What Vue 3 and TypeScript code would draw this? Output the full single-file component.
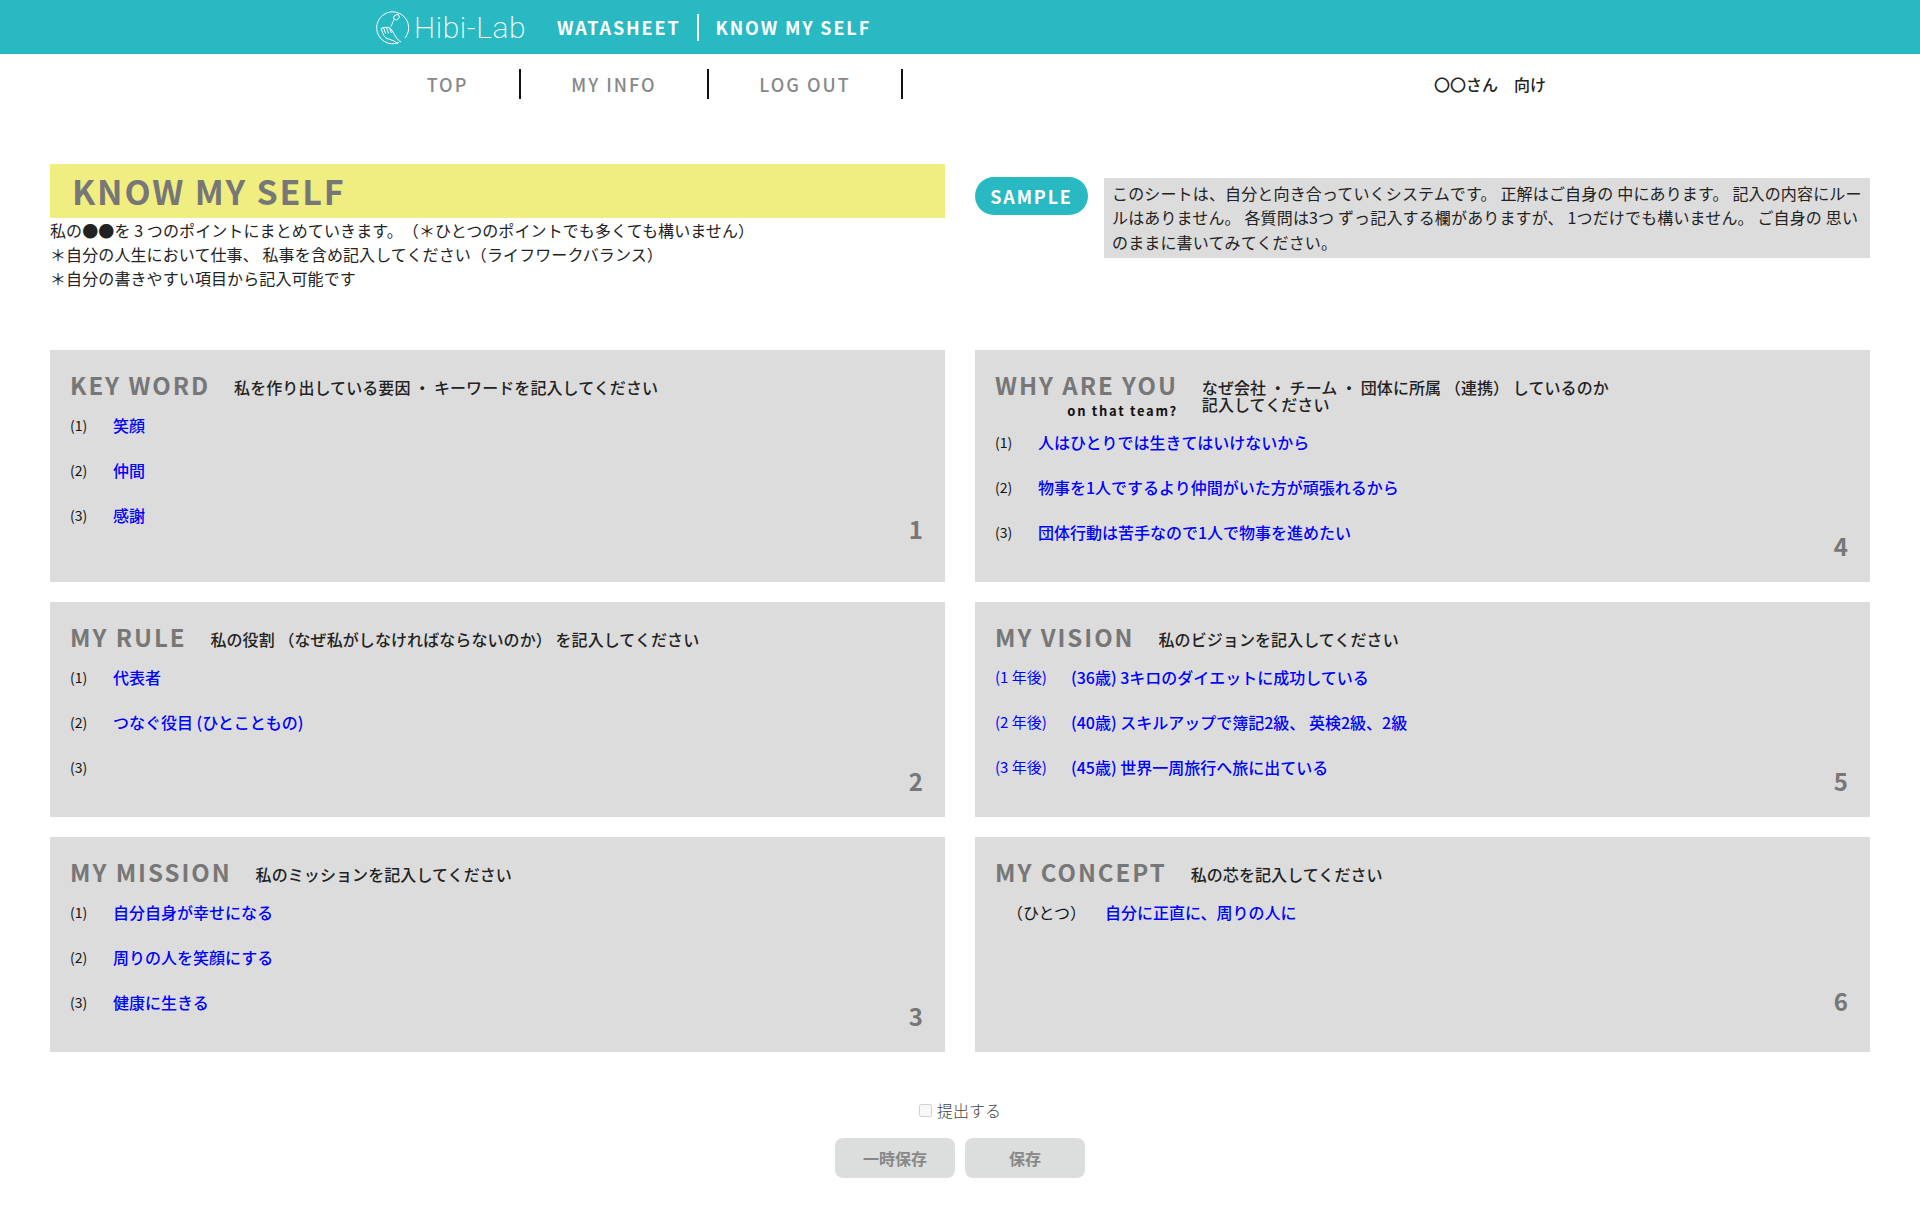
<script setup lang="ts">
interface Row {
  label: string
  value: string
}

interface Card {
  no: number
  title: string
  sub?: string
  lead: string
  rows: Row[]
  first?: boolean
  single?: boolean
}

const leftCards: Card[] = [
  {
    no: 1,
    title: 'KEY WORD',
    lead: '私を作り出している要因 ・ キーワードを記入してください',
    rows: [
      { label: '(1)', value: '笑顔' },
      { label: '(2)', value: '仲間' },
      { label: '(3)', value: '感謝' }
    ],
    first: true
  },
  {
    no: 2,
    title: 'MY RULE',
    lead: '私の役割 （なぜ私がしなければならないのか） を記入してください',
    rows: [
      { label: '(1)', value: '代表者' },
      { label: '(2)', value: 'つなぐ役目 (ひとこともの)' },
      { label: '(3)', value: '' }
    ]
  },
  {
    no: 3,
    title: 'MY MISSION',
    lead: '私のミッションを記入してください',
    rows: [
      { label: '(1)', value: '自分自身が幸せになる' },
      { label: '(2)', value: '周りの人を笑顔にする' },
      { label: '(3)', value: '健康に生きる' }
    ]
  }
]

const rightCards: Card[] = [
  {
    no: 4,
    title: 'WHY ARE YOU',
    sub: 'on that team?',
    lead: 'なぜ会社 ・ チーム ・ 団体に所属 （連携） しているのか 記入してください',
    rows: [
      { label: '(1)', value: '人はひとりでは生きてはいけないから' },
      { label: '(2)', value: '物事を1人でするより仲間がいた方が頑張れるから' },
      { label: '(3)', value: '団体行動は苦手なので1人で物事を進めたい' }
    ]
  },
  {
    no: 5,
    title: 'MY VISION',
    lead: '私のビジョンを記入してください',
    rows: [
      { label: '(1 年後)', value: '(36歳) 3キロのダイエットに成功している' },
      { label: '(2 年後)', value: '(40歳) スキルアップで簿記2級、 英検2級、2級' },
      { label: '(3 年後)', value: '(45歳) 世界一周旅行へ旅に出ている' }
    ]
  },
  {
    no: 6,
    title: 'MY CONCEPT',
    lead: '私の芯を記入してください',
    rows: [{ label: '（ひとつ）', value: '自分に正直に、周りの人に' }],
    single: true
  }
]

const cards = [0, 1, 2].flatMap((i) => [leftCards[i], rightCards[i]])
</script>

<template>
  <div class="page">
    <header class="topbar">
      <div class="logo">
        <svg class="logo__mark" viewBox="0 0 36 36" width="36" height="36" fill="none" stroke="#fff" stroke-width="1">
          <path d="M25 33.500A16 16 0 1 1 31 29" />
          <path d="M20 7l4-2 1.500 3.500-3 2.500-3-1z" />
          <path d="M20 10.500l-3 7" />
          <path d="M7 19.500c3-1.500 6-1.500 9-.5l3 4c1 2 2 4 3 5 1 2 3 4 5 5" />
          <path d="M7 19.500l2 5c1 3 2 4 4 5 3 1 7 2 11 5" />
          <path d="M9.500 18.500l2 6M12.500 18.500l2 6M15.500 19l2 5" />
        </svg>
        <span class="logo__text">Hibi-Lab</span>
      </div>
      <span class="topbar__link">WATASHEET</span>
      <span class="topbar__sep"></span>
      <span class="topbar__link">KNOW MY SELF</span>
    </header>

    <nav class="subnav">
      <a class="subnav__item subnav__item--top">TOP</a>
      <a class="subnav__item subnav__item--info">MY INFO</a>
      <a class="subnav__item subnav__item--out">LOG OUT</a>
      <span class="subnav__user">〇〇さん　向け</span>
    </nav>

    <section class="intro">
      <div>
        <h1 class="intro__title">KNOW MY SELF</h1>
        <p class="intro__text">私の●●を 3 つのポイントにまとめていきます。（＊ひとつのポイントでも多くても構いません）</p>
        <p class="intro__text">＊自分の人生において仕事、 私事を含め記入してください（ライフワークバランス）</p>
        <p class="intro__text">＊自分の書きやすい項目から記入可能です</p>
      </div>
      <div class="sample">
        <span class="sample__badge">SAMPLE</span>
        <p class="sample__text">このシートは、自分と向き合っていくシステムです。 正解はご自身の 中にあります。 記入の内容にルールはありません。 各質問は3つ ずっ記入する欄がありますが、 1つだけでも構いません。 ご自身の 思いのままに書いてみてください。</p>
      </div>
    </section>

    <section class="grid">
      <article v-for="card in cards" :key="card.no" :class="['card', { 'card--first': card.first, 'card--single': card.single }]">
        <div class="card__head">
          <div class="card__heading">
            <h2 class="card__title">{{ card.title }}</h2>
            <span v-if="card.sub" class="card__sub">{{ card.sub }}</span>
          </div>
          <p :class="['card__lead', { 'card__lead--narrow': card.sub }]">{{ card.lead }}</p>
        </div>
        <ul :class="['card__rows', { 'card__rows--sub': card.sub }]">
          <li v-for="row in card.rows" :key="row.label" class="card__row">
            <span :class="['card__label', { 'card__label--blue': card.no === 5, 'card__label--wide': card.no === 6 }]">{{ row.label }}</span>
            <span class="card__value">{{ row.value }}</span>
          </li>
        </ul>
        <span class="card__no">{{ card.no }}</span>
      </article>
    </section>

    <footer class="actions">
      <label class="actions__check">
        <input type="checkbox" disabled />
        <span>提出する</span>
      </label>
      <div class="actions__buttons">
        <button class="btn" type="button" disabled>一時保存</button>
        <button class="btn" type="button" disabled>保存</button>
      </div>
    </footer>
  </div>
</template>

<style>
body {
  background: #fff;
}
</style>

<style scoped>
.page {
  width: 1920px;
  height: 1208px;
  overflow: hidden;
  font-family: "Noto Sans CJK JP", "Noto Sans", sans-serif;
  color: #222;
  text-spacing-trim: space-all;
}

.topbar {
  display: flex;
  align-items: center;
  height: 54px;
  padding-left: 374px;
  background: #29b9c2;
  color: #fff;
}

.logo {
  display: flex;
  align-items: center;
  width: 183px;
  gap: 4px;
}

.logo__mark {
  display: block;
  flex: none;
}

.logo__text {
  font-family: Roboto, sans-serif;
  font-weight: 200;
  font-size: 30px;
  letter-spacing: 0.6px;
}

.topbar__link {
  font-size: 18px;
  font-weight: 700;
  letter-spacing: 1.85px;
}

.topbar__sep {
  width: 2px;
  height: 27px;
  margin: 0 17px 0 16px;
  background: #fff;
}

.subnav {
  display: flex;
  align-items: center;
  height: 30px;
  margin-top: 15px;
  color: #888;
  font-size: 18px;
  font-weight: 500;
  letter-spacing: 2px;
}

.subnav__item {
  display: flex;
  align-items: center;
  justify-content: center;
  height: 30px;
  border-right: 2px solid #111;
}

.subnav__item--top {
  width: 143px;
  padding-left: 2px;
  margin-left: 374px;
}

.subnav__item--info {
  width: 186px;
}

.subnav__item--out {
  width: 192px;
}

.subnav__user {
  margin-left: 531px;
  color: #222;
  font-size: 16px;
  font-weight: 500;
  letter-spacing: 0;
}

.intro {
  display: grid;
  grid-template-columns: 895px 895px;
  gap: 30px;
  height: 186px;
  margin: 65px 0 0 50px;
}

.intro__title {
  height: 54px;
  margin: 0;
  padding-left: 22px;
  background: #f0ee80;
  color: #777;
  font-size: 34px;
  font-weight: 700;
  line-height: 54px;
  letter-spacing: 1.8px;
}

.intro__text {
  margin: 0;
  font-size: 16px;
  line-height: 24.2px;
  letter-spacing: 0.1px;
  white-space: nowrap;
}

.sample {
  display: flex;
  align-items: flex-start;
  gap: 16px;
  padding-top: 13px;
}

.sample__badge {
  display: block;
  flex: none;
  width: 113px;
  height: 38px;
  border-radius: 19px;
  background: #29b9c2;
  color: #fff;
  font-size: 18px;
  font-weight: 700;
  line-height: 38px;
  letter-spacing: 1.8px;
  text-align: center;
}

.sample__text {
  width: 766px;
  height: 80px;
  box-sizing: border-box;
  margin: 1px 0 0;
  padding: 3px 8px;
  background: #dcdcdc;
  font-size: 16px;
  line-height: 24.3px;
  letter-spacing: 0.15px;
}

.grid {
  display: grid;
  grid-template-columns: 895px 895px;
  grid-template-rows: 232px 215px 215px;
  gap: 20px 30px;
  margin-left: 50px;
}

.card {
  position: relative;
  padding: 20px;
  background: #dcdcdc;
}

.card__head {
  display: flex;
  align-items: flex-start;
  gap: 24px;
  height: 30px;
}

.card__heading {
  display: flex;
  flex-direction: column;
  align-items: flex-end;
}

.card__title {
  margin: 0;
  color: #777;
  font-size: 24px;
  font-weight: 700;
  line-height: 30px;
  letter-spacing: 1.95px;
  white-space: nowrap;
}

.card__sub {
  margin-top: 4px;
  color: #111;
  font-size: 13px;
  font-weight: 700;
  line-height: 14px;
  letter-spacing: 1.7px;
}

.card__lead {
  margin: 9px 0 0;
  font-size: 16px;
  font-weight: 500;
  line-height: 17px;
  letter-spacing: 0.08px;
  white-space: nowrap;
}

.card__lead--narrow {
  width: 416px;
  white-space: normal;
}

.card__rows {
  display: flex;
  flex-direction: column;
  gap: 21px;
  margin: 13px 0 0;
  padding: 0;
  list-style: none;
}

.card__rows--sub {
  margin-top: 30px;
}

.card__row {
  display: flex;
  height: 24px;
  align-items: center;
  font-size: 16px;
  line-height: 24px;
}

.card__label {
  flex: none;
  width: 43px;
  color: #111;
  font-size: 14px;
}

.card__label--blue {
  width: 76px;
  color: #00f;
  font-size: 15px;
}

.card__label--wide {
  width: 110px;
  padding-left: 12px;
  box-sizing: border-box;
  font-size: 16px;
}

.card__value {
  color: #00f;
  font-weight: 500;
  white-space: nowrap;
}

.card__no {
  position: absolute;
  right: 22px;
  bottom: 21px;
  color: #777;
  font-size: 24px;
  font-weight: 700;
  line-height: 30px;
}

.card--first .card__no {
  bottom: 38px;
}

.card--single .card__no {
  bottom: 36px;
}

.actions {
  display: flex;
  flex-direction: column;
  align-items: center;
  margin-top: 46px;
}

.actions__check {
  display: flex;
  align-items: center;
  gap: 5px;
  height: 24px;
  color: #444;
  font-size: 16px;
  font-weight: 300;
}

.actions__check input {
  width: 13px;
  height: 13px;
  margin: 0;
}

.actions__buttons {
  display: flex;
  gap: 10px;
  margin-top: 16px;
}

.btn {
  width: 120px;
  height: 40px;
  border: 0;
  border-radius: 8px;
  background: #dcdddd;
  color: #888;
  font-family: inherit;
  font-size: 16px;
  font-weight: 700;
}
</style>
